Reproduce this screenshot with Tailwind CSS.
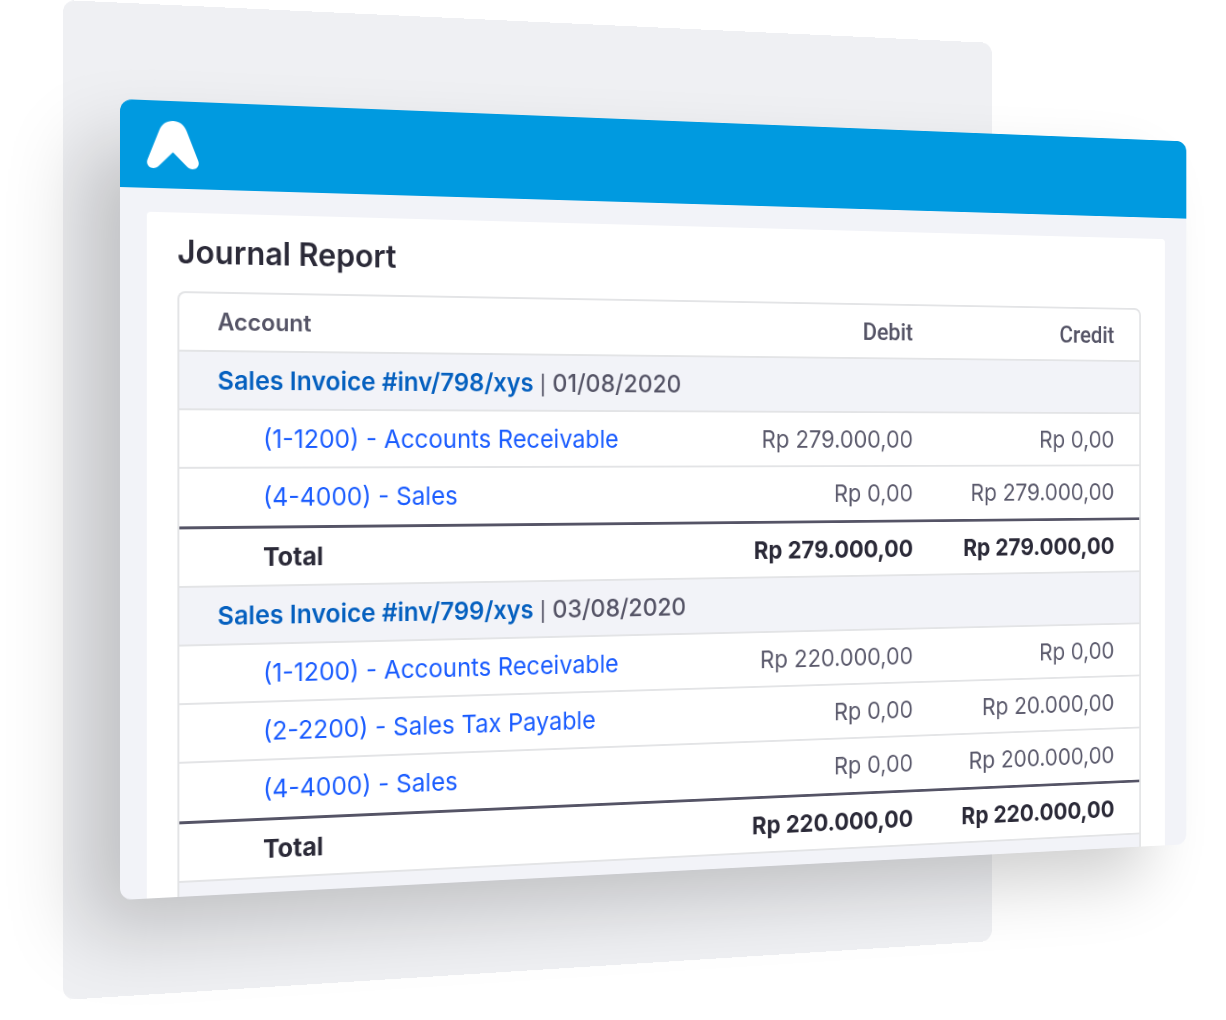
<!DOCTYPE html>
<html lang="en">
<head>
<meta charset="utf-8">
<title>Journal Report</title>
<script src="https://cdn.jsdelivr.net/npm/@tailwindcss/browser@4"></script>
</head>
<body class="bg-white font-[Inter,sans-serif] overflow-hidden">
<main class="grid grid-cols-1 items-start pb-5">
  <!-- Backdrop panel -->
  <div class="col-start-1 row-start-1 ml-[63px] w-[calc(100%-188px)] h-[1000px] rounded-xl bg-[#eff0f3] origin-[0_421px] [transform:perspective(797px)_rotateY(5deg)]"></div>

  <!-- Report window, turned away to the right -->
  <section class="col-start-1 row-start-1 mt-[99px] ml-[120px] w-[calc(100%-6px)] h-[801px] flex flex-col rounded-xl overflow-hidden bg-[#f2f3f8] shadow-[-44px_38px_80px_-8px_rgba(0,0,0,0.2)] origin-[0_346px] [transform:perspective(761px)_rotateY(5deg)]">
    <header class="h-[88px] shrink-0 flex items-center px-[27px] bg-[#009ae0]">
      <svg class="w-[53px] h-12" viewBox="0 0 53 48" fill="#fff" role="img" aria-label="Logo"><path d="M12.5 10C15 3.500 20 0 26.500 0S38 3.500 40.500 10L52.300 39.500C54 44 51 48 46.500 48C44 48 42.300 47 40.800 45.500L26.500 31.500L12.200 45.500C10.700 47 9 48 6.500 48C2 48-1 44 .7 39.500Z"/></svg>
    </header>

    <div class="mt-6 ml-[27px] mr-7 grow px-[31px] pt-5 rounded-t-sm bg-white">
      <h1 class="mb-[19px] text-[32px] leading-10 font-semibold text-[#2b2a38]">Journal Report</h1>

      <div class="border-2 border-b-0 border-[#e3e4e6] rounded-t-lg overflow-hidden">
        <table class="w-full table-fixed border-separate border-spacing-0 text-[26px] leading-8 text-[#5b5a6c]">
          <colgroup><col><col class="w-[250px]"><col class="w-[283px]"></colgroup>
          <thead>
            <tr class="h-[59px] text-[#555466] *:border-b-2 *:border-[#e3e4e6]">
              <th scope="col" class="pl-[39px] text-left text-2xl font-semibold">Account</th>
              <th scope="col" class="text-right font-medium font-[Roboto,sans-serif]">Debit</th>
              <th scope="col" class="pr-8 text-right font-medium font-[Roboto,sans-serif]">Credit</th>
            </tr>
          </thead>
          <tbody>
            <tr class="h-[59px] bg-[#f2f3f8] *:border-b-2 *:border-[#e3e4e6]">
              <th scope="rowgroup" colspan="3" class="pl-[39px] text-left font-medium text-[#555466]"><a href="#inv-798" class="font-semibold text-[#0560bf]">Sales Invoice #inv/798/xys</a> <span class="text-xl">|</span> 01/08/2020</th>
            </tr>
            <tr class="h-[59px] *:border-b-2 *:border-[#e3e4e6]">
              <td class="pl-[86px]"><a href="#1-1200" class="text-[#1a5cff]">(1-1200) - Accounts Receivable</a></td>
              <td class="text-right">Rp 279.000,00</td>
              <td class="pr-8 text-right">Rp 0,00</td>
            </tr>
            <tr class="h-[61px] *:border-b-[3px] *:border-[#555466]">
              <td class="pl-[86px]"><a href="#4-4000" class="text-[#1a5cff]">(4-4000) - Sales</a></td>
              <td class="text-right">Rp 0,00</td>
              <td class="pr-8 text-right">Rp 279.000,00</td>
            </tr>
            <tr class="h-[59px] text-[#2b2a38] *:border-b-2 *:border-[#e3e4e6] *:font-bold">
              <th scope="row" class="pl-[86px] text-left">Total</th>
              <td class="text-right">Rp 279.000,00</td>
              <td class="pr-8 text-right">Rp 279.000,00</td>
            </tr>
          </tbody>
          <tbody>
            <tr class="h-[59px] bg-[#f2f3f8] *:border-b-2 *:border-[#e3e4e6]">
              <th scope="rowgroup" colspan="3" class="pl-[39px] text-left font-medium text-[#555466]"><a href="#inv-799" class="font-semibold text-[#0560bf]">Sales Invoice #inv/799/xys</a> <span class="text-xl">|</span> 03/08/2020</th>
            </tr>
            <tr class="h-[59px] *:border-b-2 *:border-[#e3e4e6]">
              <td class="pl-[86px]"><a href="#1-1200" class="text-[#1a5cff]">(1-1200) - Accounts Receivable</a></td>
              <td class="text-right">Rp 220.000,00</td>
              <td class="pr-8 text-right">Rp 0,00</td>
            </tr>
            <tr class="h-[59px] *:border-b-2 *:border-[#e3e4e6]">
              <td class="pl-[86px]"><a href="#2-2200" class="text-[#1a5cff]">(2-2200) - Sales Tax Payable</a></td>
              <td class="text-right">Rp 0,00</td>
              <td class="pr-8 text-right">Rp 20.000,00</td>
            </tr>
            <tr class="h-[61px] *:border-b-[3px] *:border-[#555466]">
              <td class="pl-[86px]"><a href="#4-4000" class="text-[#1a5cff]">(4-4000) - Sales</a></td>
              <td class="text-right">Rp 0,00</td>
              <td class="pr-8 text-right">Rp 200.000,00</td>
            </tr>
            <tr class="h-[59px] text-[#2b2a38] *:border-b-2 *:border-[#e3e4e6] *:font-bold">
              <th scope="row" class="pl-[86px] text-left">Total</th>
              <td class="text-right">Rp 220.000,00</td>
              <td class="pr-8 text-right">Rp 220.000,00</td>
            </tr>
          </tbody>
          <tbody>
            <tr class="h-[59px] bg-[#f2f3f8]"><td colspan="3"></td></tr>
          </tbody>
        </table>
      </div>
    </div>
  </section>
</main>
</body>
</html>
